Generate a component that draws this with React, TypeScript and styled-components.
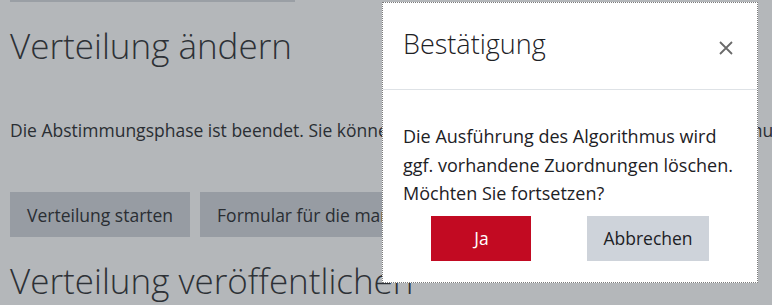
import React from 'react';
import styled, { createGlobalStyle } from 'styled-components';

const GlobalStyle = createGlobalStyle`
  html, body {
    margin: 0;
    padding: 0;
    background: #b4b7ba;
  }
  body {
    font-family: "Open Sans", "Noto Sans", sans-serif;
    color: #2a2e33;
    overflow: hidden;
  }
`;

export default function App() {
  return (
    <>
      <GlobalStyle />
      <Page>
        <TopBar />
        <Heading>Verteilung ändern</Heading>
        <Info>
          Die Abstimmungsphase ist beendet. Sie können die Verteilung jetzt starten oder Ihre
          Zuordnungen manuell vornehmen.
        </Info>
        <ButtonRow>
          <PageButton>Verteilung starten</PageButton>
          <PageButton>Formular für die manuelle Zuordnung</PageButton>
        </ButtonRow>
        <Heading>Verteilung veröffentlichen</Heading>
      </Page>

      <Modal role="dialog">
        <ModalHeader>
          <ModalTitle>Bestätigung</ModalTitle>
          <CloseButton aria-label="Schließen">
            <svg width="14" height="14" viewBox="0 0 14 14">
              <path d="M1 1 L13 13 M13 1 L1 13" stroke="#6a6a6a" strokeWidth="1.8" />
            </svg>
          </CloseButton>
        </ModalHeader>
        <ModalBody>
          Die Ausführung des Algorithmus wird ggf. vorhandene Zuordnungen löschen. Möchten Sie
          fortsetzen?
        </ModalBody>
        <ModalFooter>
          <DialogButton $primary>Ja</DialogButton>
          <DialogButton>Abbrechen</DialogButton>
        </ModalFooter>
      </Modal>
    </>
  );
}

const Page = styled.div`
  padding: 0 10px;
  white-space: nowrap;
  overflow: hidden;
  height: 305px;
`;

const TopBar = styled.div`
  width: 285px;
  height: 2px;
  background: #9a9fa5;
`;

const Heading = styled.h2`
  margin: 22px 0 0 0;
  font-size: 35px;
  font-weight: 300;
  line-height: 44px;
  color: #2d3136;
`;

const Info = styled.p`
  margin: 50px 0 0 0;
  font-size: 17.5px;
  line-height: 24px;
`;

const ButtonRow = styled.div`
  display: flex;
  gap: 10px;
  margin-top: 50px;
  margin-bottom: 19px;
`;

const PageButton = styled.button`
  height: 45px;
  padding: 0 17px;
  border: none;
  background: #979ca3;
  color: #2a2e33;
  font-family: inherit;
  font-size: 17.5px;
`;

const Modal = styled.div`
  position: absolute;
  left: 382px;
  top: 2px;
  width: 376px;
  height: 281px;
  box-sizing: border-box;
  border: 1px dotted #7a7a7a;
  background: #fff;
  display: flex;
  flex-direction: column;
`;

const ModalHeader = styled.div`
  display: flex;
  align-items: center;
  justify-content: space-between;
  height: 87px;
  padding: 0 24px 6px 20px;
  box-sizing: border-box;
  border-bottom: 1px solid #dee2e6;
`;

const ModalTitle = styled.h5`
  margin: 0;
  font-size: 27px;
  font-weight: 300;
  color: #1d2125;
`;

const CloseButton = styled.button`
  display: flex;
  padding: 0;
  margin-top: 10px;
  border: none;
  background: none;
`;

const ModalBody = styled.div`
  padding: 32px 20px 0 20px;
  font-size: 18px;
  line-height: 28.5px;
  color: #1d2125;
`;

const ModalFooter = styled.div`
  display: flex;
  justify-content: center;
  gap: 56px;
  margin-top: 8px;
`;

const DialogButton = styled.button<{ $primary?: boolean }>`
  height: 45px;
  min-width: ${(p) => (p.$primary ? '100px' : '0')};
  padding: 0 16px;
  border: none;
  background: ${(p) => (p.$primary ? '#c20a22' : '#ced3da')};
  color: ${(p) => (p.$primary ? '#fff' : '#1d2125')};
  font-family: inherit;
  font-size: 17.5px;
`;
